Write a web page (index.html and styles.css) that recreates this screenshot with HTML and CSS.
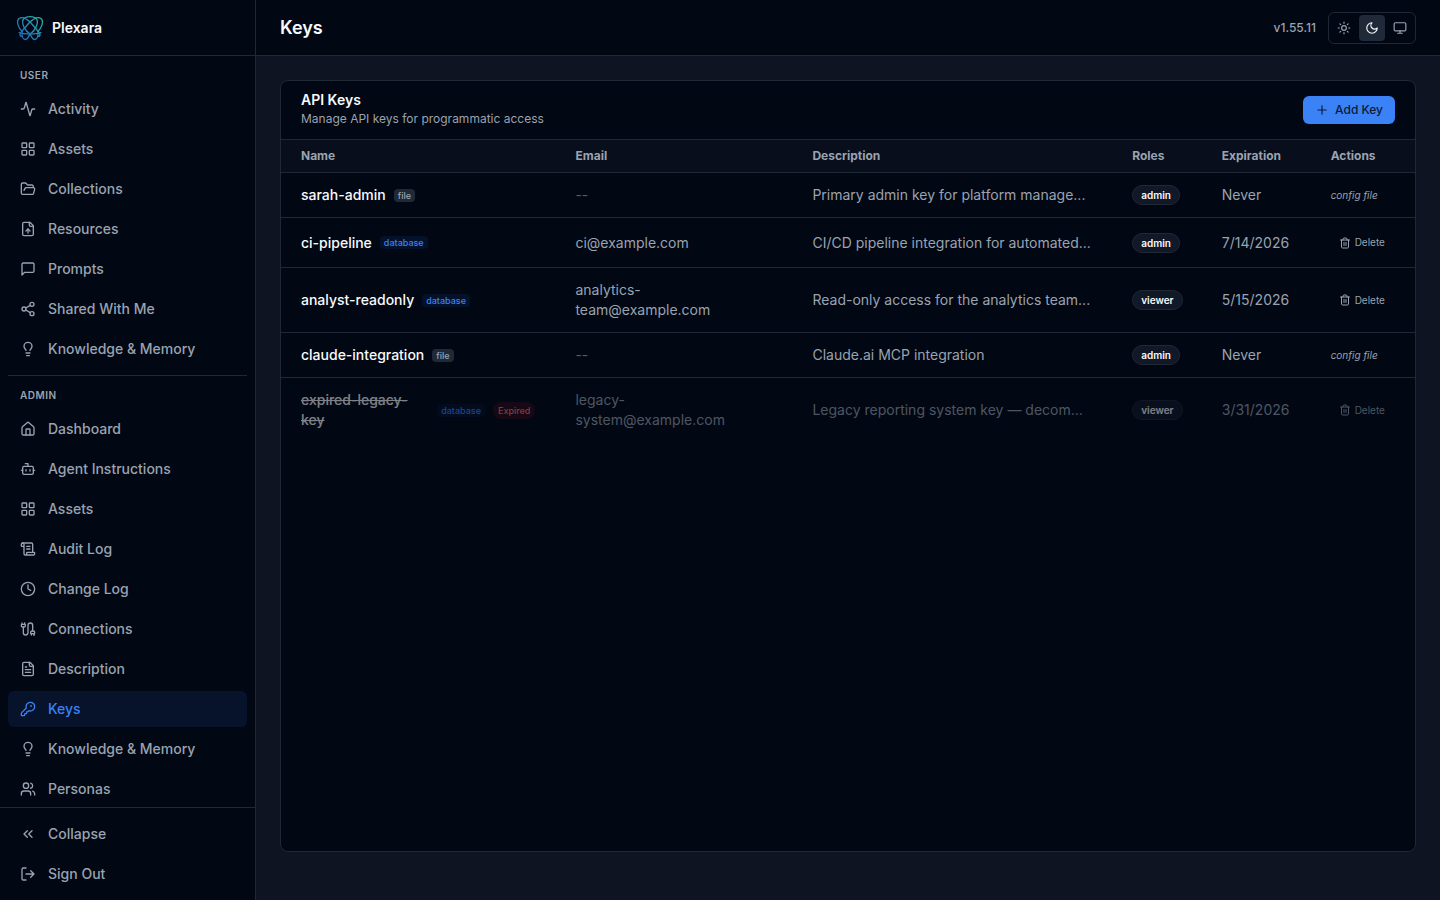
FILE: index.html
```html
<!DOCTYPE html>
<html lang="en">
<head>
<meta charset="utf-8">
<meta name="viewport" content="width=device-width, initial-scale=1">
<title>Keys - Plexara</title>
<link rel="stylesheet" href="styles.css">
</head>
<body>
<svg class="sprite" aria-hidden="true">
  <symbol id="activity" viewBox="0 0 24 24"><path d="M22 12h-2.48a2 2 0 0 0-1.93 1.46l-2.35 8.36a.25.25 0 0 1-.48 0L9.24 2.18a.25.25 0 0 0-.48 0l-2.35 8.36A2 2 0 0 1 4.49 12H2"/></symbol>
  <symbol id="grid" viewBox="0 0 24 24"><rect x="3" y="3" width="7" height="7" rx="1"/><rect x="14" y="3" width="7" height="7" rx="1"/><rect x="14" y="14" width="7" height="7" rx="1"/><rect x="3" y="14" width="7" height="7" rx="1"/></symbol>
  <symbol id="folder" viewBox="0 0 24 24"><path d="m6 14 1.5-2.9A2 2 0 0 1 9.24 10H20a2 2 0 0 1 1.94 2.5l-1.54 6a2 2 0 0 1-1.95 1.5H4a2 2 0 0 1-2-2V5a2 2 0 0 1 2-2h3.9a2 2 0 0 1 1.69.9l.81 1.2a2 2 0 0 0 1.67.9H18a2 2 0 0 1 2 2v2"/></symbol>
  <symbol id="file-up" viewBox="0 0 24 24"><path d="M15 2H6a2 2 0 0 0-2 2v16a2 2 0 0 0 2 2h12a2 2 0 0 0 2-2V7Z"/><path d="M14 2v4a2 2 0 0 0 2 2h4"/><path d="M12 12v6"/><path d="m15 15-3-3-3 3"/></symbol>
  <symbol id="message" viewBox="0 0 24 24"><path d="M21 15a2 2 0 0 1-2 2H7l-4 4V5a2 2 0 0 1 2-2h14a2 2 0 0 1 2 2z"/></symbol>
  <symbol id="share" viewBox="0 0 24 24"><circle cx="18" cy="5" r="3"/><circle cx="6" cy="12" r="3"/><circle cx="18" cy="19" r="3"/><path d="m8.59 13.51 6.83 3.98M15.41 6.51l-6.82 3.98"/></symbol>
  <symbol id="bulb" viewBox="0 0 24 24"><path d="M15 14c.2-1 .7-1.7 1.5-2.5 1-.9 1.5-2.2 1.5-3.5A6 6 0 0 0 6 8c0 1 .2 2.2 1.5 3.5.7.7 1.3 1.5 1.5 2.5M9 18h6M10 22h4"/></symbol>
  <symbol id="house" viewBox="0 0 24 24"><path d="M15 21v-8a1 1 0 0 0-1-1h-4a1 1 0 0 0-1 1v8"/><path d="M3 10a2 2 0 0 1 .709-1.528l7-6a2 2 0 0 1 2.582 0l7 6A2 2 0 0 1 21 10v9a2 2 0 0 1-2 2H5a2 2 0 0 1-2-2z"/></symbol>
  <symbol id="bot" viewBox="0 0 24 24"><path d="M12 8V4H8"/><rect x="4" y="8" width="16" height="12" rx="2"/><path d="M2 14h2M20 14h2M15 13v2M9 13v2"/></symbol>
  <symbol id="scroll" viewBox="0 0 24 24"><path d="M15 12h-5M15 8h-5M19 17V5a2 2 0 0 0-2-2H4"/><path d="M8 21h12a2 2 0 0 0 2-2v-1a1 1 0 0 0-1-1H11a1 1 0 0 0-1 1v1a2 2 0 1 1-4 0V5a2 2 0 1 0-4 0v2a1 1 0 0 0 1 1h3"/></symbol>
  <symbol id="clock" viewBox="0 0 24 24"><circle cx="12" cy="12" r="10"/><path d="M12 6v6l4 2"/></symbol>
  <symbol id="cable" viewBox="0 0 24 24"><path d="M17 21v-2a1 1 0 0 1-1-1v-1a2 2 0 0 1 2-2h2a2 2 0 0 1 2 2v1a1 1 0 0 1-1 1v2"/><path d="M19 15V6.5a1 1 0 0 0-7 0v11a1 1 0 0 1-7 0V9"/><path d="M21 21v-2h-4M3 5h4V3"/><path d="M7 5a1 1 0 0 1 1 1v1a2 2 0 0 1-2 2H4a2 2 0 0 1-2-2V6a1 1 0 0 1 1-1V3"/></symbol>
  <symbol id="file-text" viewBox="0 0 24 24"><path d="M15 2H6a2 2 0 0 0-2 2v16a2 2 0 0 0 2 2h12a2 2 0 0 0 2-2V7Z"/><path d="M14 2v4a2 2 0 0 0 2 2h4M10 9H8M16 13H8M16 17H8"/></symbol>
  <symbol id="key" viewBox="0 0 24 24"><path d="M2.586 17.414A2 2 0 0 0 2 18.828V21a1 1 0 0 0 1 1h3a1 1 0 0 0 1-1v-1a1 1 0 0 1 1-1h1a1 1 0 0 0 1-1v-1a1 1 0 0 1 1-1h.172a2 2 0 0 0 1.414-.586l.814-.814a6.5 6.5 0 1 0-4-4z"/><circle cx="16.5" cy="7.5" r=".5"/></symbol>
  <symbol id="users" viewBox="0 0 24 24"><path d="M16 21v-2a4 4 0 0 0-4-4H6a4 4 0 0 0-4 4v2"/><circle cx="9" cy="7" r="4"/><path d="M22 21v-2a4 4 0 0 0-3-3.87M16 3.13a4 4 0 0 1 0 7.75"/></symbol>
  <symbol id="collapse" viewBox="0 0 24 24"><path d="m11 17-5-5 5-5M18 17l-5-5 5-5"/></symbol>
  <symbol id="logout" viewBox="0 0 24 24"><path d="M9 21H5a2 2 0 0 1-2-2V5a2 2 0 0 1 2-2h4M16 17l5-5-5-5M21 12H9"/></symbol>
  <symbol id="sun" viewBox="0 0 24 24"><circle cx="12" cy="12" r="4"/><path d="M12 2v2M12 20v2M4.93 4.93l1.41 1.41M17.66 17.66l1.41 1.41M2 12h2M20 12h2M6.34 17.66l-1.41 1.41M19.07 4.93l-1.41 1.41"/></symbol>
  <symbol id="moon" viewBox="0 0 24 24"><path d="M12 3a6 6 0 0 0 9 9 9 9 0 1 1-9-9Z"/></symbol>
  <symbol id="monitor" viewBox="0 0 24 24"><rect x="2" y="3" width="20" height="14" rx="2"/><path d="M8 21h8M12 17v4"/></symbol>
  <symbol id="plus" viewBox="0 0 24 24"><path d="M5 12h14M12 5v14"/></symbol>
  <symbol id="trash" viewBox="0 0 24 24"><path d="M3 6h18M19 6v14c0 1-1 2-2 2H7c-1 0-2-1-2-2V6M8 6V4c0-1 1-2 2-2h4c1 0 2 1 2 2v2M10 11v6M14 11v6"/></symbol>
</svg>
<div class="app">
  <aside class="sidebar">
    <div class="brand">
      <svg class="logo" viewBox="0 0 28 28" aria-hidden="true">
        <defs><linearGradient id="brand-gradient" gradientUnits="userSpaceOnUse" x1="4" y1="24" x2="24" y2="4"><stop offset="0" stop-color="#1d68b4"/><stop offset=".5" stop-color="#2389b8"/><stop offset="1" stop-color="#2fae9e"/></linearGradient></defs>
        <g fill="none" stroke="url(#brand-gradient)" stroke-width="1.3" stroke-linecap="round" stroke-linejoin="round">
          <path d="M7 6C9 1.500 19 1.500 21 6C22.500 9.500 19 17 14.500 19.500"/>
          <path d="M7 6C5.500 9.500 9 17 13.500 19.500"/>
          <path d="M6.500 18C2 14 0 7 3 4.500C6 2.500 11 5 15 9L21.500 16.500C25 20 24.500 22.500 22 22.500"/>
          <path d="M21.500 18C26 14 28 7 25 4.500C22 2.500 17 5 13 9L6.500 16.500C3 20 3.500 22.500 6 22.500"/>
          <path d="M3 18.500C8 20.500 20 20.500 25 18.500"/>
          <path d="M6 20C6 23 7.500 25.500 9.500 25.500C11.500 25.500 12.500 23 14 20"/>
          <path d="M22 20C22 23 20.500 25.500 18.500 25.500C16.500 25.500 15.500 23 14 20"/>
        </g>
      </svg>
      <span>Plexara</span>
    </div>
    <nav class="nav" aria-label="Main">
      <h2 class="group-label">USER</h2>
      <ul class="group">
        <li><a class="item" href="#"><svg class="icon"><use href="#activity"/></svg>Activity</a></li>
        <li><a class="item" href="#"><svg class="icon"><use href="#grid"/></svg>Assets</a></li>
        <li><a class="item" href="#"><svg class="icon"><use href="#folder"/></svg>Collections</a></li>
        <li><a class="item" href="#"><svg class="icon"><use href="#file-up"/></svg>Resources</a></li>
        <li><a class="item" href="#"><svg class="icon"><use href="#message"/></svg>Prompts</a></li>
        <li><a class="item" href="#"><svg class="icon"><use href="#share"/></svg>Shared With Me</a></li>
        <li><a class="item" href="#"><svg class="icon"><use href="#bulb"/></svg>Knowledge &amp; Memory</a></li>
      </ul>
      <hr class="divider">
      <h2 class="group-label">ADMIN</h2>
      <ul class="group">
        <li><a class="item" href="#"><svg class="icon"><use href="#house"/></svg>Dashboard</a></li>
        <li><a class="item" href="#"><svg class="icon"><use href="#bot"/></svg>Agent Instructions</a></li>
        <li><a class="item" href="#"><svg class="icon"><use href="#grid"/></svg>Assets</a></li>
        <li><a class="item" href="#"><svg class="icon"><use href="#scroll"/></svg>Audit Log</a></li>
        <li><a class="item" href="#"><svg class="icon"><use href="#clock"/></svg>Change Log</a></li>
        <li><a class="item" href="#"><svg class="icon"><use href="#cable"/></svg>Connections</a></li>
        <li><a class="item" href="#"><svg class="icon"><use href="#file-text"/></svg>Description</a></li>
        <li><a class="item active" href="#" aria-current="page"><svg class="icon"><use href="#key"/></svg>Keys</a></li>
        <li><a class="item" href="#"><svg class="icon"><use href="#bulb"/></svg>Knowledge &amp; Memory</a></li>
        <li><a class="item" href="#"><svg class="icon"><use href="#users"/></svg>Personas</a></li>
      </ul>
    </nav>
    <div class="sidebar-footer">
      <button class="item" type="button"><svg class="icon"><use href="#collapse"/></svg>Collapse</button>
      <button class="item" type="button"><svg class="icon"><use href="#logout"/></svg>Sign Out</button>
    </div>
  </aside>
  <div class="page">
    <header class="topbar">
      <h1 class="page-title">Keys</h1>
      <span class="version">v1.55.11</span>
      <div class="theme" role="group" aria-label="Theme">
        <button class="theme-button" type="button" aria-label="Light"><svg class="icon small"><use href="#sun"/></svg></button>
        <button class="theme-button selected" type="button" aria-label="Dark" aria-pressed="true"><svg class="icon small"><use href="#moon"/></svg></button>
        <button class="theme-button" type="button" aria-label="System"><svg class="icon small"><use href="#monitor"/></svg></button>
      </div>
    </header>
    <main class="content">
      <section class="card">
        <div class="card-header">
          <div class="card-heading">
            <h2 class="card-title">API Keys</h2>
            <p class="card-subtitle">Manage API keys for programmatic access</p>
          </div>
          <button class="add" type="button"><svg class="icon small"><use href="#plus"/></svg>Add Key</button>
        </div>
        <table class="keys">
          <colgroup><col class="col-name"><col class="col-email"><col class="col-description"><col class="col-roles"><col class="col-expiration"><col class="col-actions"></colgroup>
          <thead>
            <tr><th>Name</th><th>Email</th><th>Description</th><th>Roles</th><th>Expiration</th><th>Actions</th></tr>
          </thead>
          <tbody>
            <tr>
              <td><div class="name"><span>sarah-admin</span><span class="tag">file</span></div></td>
              <td class="none">--</td>
              <td class="description">Primary admin key for platform manage...</td>
              <td><span class="role">admin</span></td>
              <td>Never</td>
              <td><span class="config">config file</span></td>
            </tr>
            <tr>
              <td><div class="name"><span>ci-pipeline</span><span class="tag database">database</span></div></td>
              <td>ci@example.com</td>
              <td class="description">CI/CD pipeline integration for automated...</td>
              <td><span class="role">admin</span></td>
              <td>7/14/2026</td>
              <td><button class="delete" type="button"><svg class="icon tiny"><use href="#trash"/></svg>Delete</button></td>
            </tr>
            <tr>
              <td><div class="name"><span>analyst-readonly</span><span class="tag database">database</span></div></td>
              <td>analytics-team@example.com</td>
              <td class="description">Read-only access for the analytics team...</td>
              <td><span class="role">viewer</span></td>
              <td>5/15/2026</td>
              <td><button class="delete" type="button"><svg class="icon tiny"><use href="#trash"/></svg>Delete</button></td>
            </tr>
            <tr>
              <td><div class="name"><span>claude-integration</span><span class="tag">file</span></div></td>
              <td class="none">--</td>
              <td class="description">Claude.ai MCP integration</td>
              <td><span class="role">admin</span></td>
              <td>Never</td>
              <td><span class="config">config file</span></td>
            </tr>
            <tr class="expired">
              <td><div class="name"><s>expired-legacy-key</s><span class="tag database">database</span><span class="tag expired-tag">Expired</span></div></td>
              <td>legacy-system@example.com</td>
              <td class="description">Legacy reporting system key — decom...</td>
              <td><span class="role">viewer</span></td>
              <td>3/31/2026</td>
              <td><button class="delete" type="button"><svg class="icon tiny"><use href="#trash"/></svg>Delete</button></td>
            </tr>
          </tbody>
        </table>
      </section>
    </main>
  </div>
</div>
</body>
</html>
```
FILE: styles.css
```css
:root {
  --bg: #010713;
  --surface: #0e1422;
  --head: #080e1b;
  --border: #1f2835;
  --secondary: #1f2937;
  --text: #f9fafb;
  --muted: #9aa3b0;
  --primary: #3b82f6;
}

* { box-sizing: border-box; }

body {
  margin: 0;
  background: var(--surface);
  color: var(--text);
  font-family: Inter, "Liberation Sans", sans-serif;
  font-size: 14px;
  line-height: 20px;
}

h1, h2, p, ul { margin: 0; padding: 0; }
ul { list-style: none; }
button { font: inherit; color: inherit; border: 0; background: none; cursor: pointer; }
a { color: inherit; text-decoration: none; }

.sprite { display: none; }

.icon {
  width: 16px;
  height: 16px;
  flex: none;
  fill: none;
  stroke: currentColor;
  stroke-width: 2;
  stroke-linecap: round;
  stroke-linejoin: round;
}
.icon.small { width: 14px; height: 14px; }
.icon.tiny { width: 12px; height: 12px; }

.app { display: flex; height: 100vh; }

.sidebar {
  display: flex;
  flex-direction: column;
  flex: none;
  width: 256px;
  background: var(--bg);
  border-right: 1px solid var(--border);
}

.brand {
  display: flex;
  align-items: center;
  gap: 8px;
  flex: none;
  height: 56px;
  padding: 0 16px;
  border-bottom: 1px solid var(--border);
  font-weight: 600;
}
.logo { width: 28px; height: 28px; }

.nav { flex: 1; min-height: 0; padding: 0 8px; overflow: hidden; }
.group, .sidebar-footer { display: flex; flex-direction: column; gap: 4px; }

.group-label {
  padding: 12px 12px 8px;
  color: var(--muted);
  font-size: 10px;
  font-weight: 600;
  line-height: 15px;
  letter-spacing: 0.5px;
}

.divider { margin: 8px 0 0; border: 0; border-top: 1px solid var(--border); }

.item {
  display: flex;
  align-items: center;
  gap: 12px;
  width: 100%;
  padding: 8px 12px;
  border-radius: 6px;
  color: var(--muted);
  font-weight: 500;
  text-align: left;
}
.item.active { background: #07132b; color: var(--primary); }

.sidebar-footer { flex: none; padding: 8px; border-top: 1px solid var(--border); }

.page { display: flex; flex-direction: column; flex: 1; min-width: 0; }

.topbar {
  display: flex;
  align-items: center;
  gap: 12px;
  flex: none;
  height: 56px;
  padding: 0 24px;
  background: var(--bg);
  border-bottom: 1px solid var(--border);
}
.page-title { flex: 1; font-size: 18px; font-weight: 600; line-height: 28px; }
.version { color: var(--muted); font-size: 12px; font-weight: 500; line-height: 16px; }

.theme {
  display: flex;
  gap: 2px;
  padding: 2px;
  border: 1px solid var(--border);
  border-radius: 6px;
}
.theme-button { display: flex; padding: 6px; border-radius: 4px; color: var(--muted); }
.theme-button.selected { background: var(--secondary); color: var(--text); }

.content { display: flex; flex: 1; min-height: 0; padding: 24px 24px 48px; }

.card {
  flex: 1;
  min-width: 0;
  overflow: hidden;
  background: var(--bg);
  border: 1px solid var(--border);
  border-radius: 8px;
}
.card-header {
  display: flex;
  align-items: center;
  justify-content: space-between;
  padding: 10px 20px;
  border-bottom: 1px solid var(--border);
}
.card-title { font-size: 14px; font-weight: 600; line-height: 18px; }
.card-subtitle { color: var(--muted); font-size: 12px; line-height: 20px; }

.add {
  display: flex;
  align-items: center;
  gap: 6px;
  padding: 6px 12px;
  border-radius: 6px;
  background: var(--primary);
  color: #0b1a38;
  font-size: 12px;
  font-weight: 500;
  line-height: 16px;
}

.keys { width: 100%; table-layout: fixed; border-collapse: separate; border-spacing: 0; }
.col-name { width: 24.2%; }
.col-email { width: 20.9%; }
.col-description { width: 28.2%; }
.col-roles { width: 7.9%; }
.col-expiration { width: 9.6%; }
.col-actions { width: 9.2%; }

.keys th {
  padding: 8px 20px;
  background: var(--head);
  border-bottom: 1px solid var(--border);
  color: var(--muted);
  font-size: 12px;
  font-weight: 700;
  line-height: 16px;
  text-align: left;
}
.keys td {
  padding: 12px 20px;
  border-bottom: 1px solid var(--border);
  color: var(--muted);
}
.keys tr:last-child td { border-bottom: 0; }
.keys .none { color: #555d69; }
.keys .description { padding-right: 8px; white-space: nowrap; }

.name { display: flex; align-items: center; gap: 8px; color: var(--text); font-weight: 500; }

.tag {
  padding: 0 4px;
  border-radius: 4px;
  background: var(--secondary);
  color: var(--muted);
  font-size: 9px;
  line-height: 13px;
}
.tag.database { background: #04112a; color: var(--primary); }
.tag.expired-tag { padding: 2px 5px; border-radius: 8px; background: #2c0a18; color: #ef4444; font-weight: 500; }

.role {
  display: block;
  width: fit-content;
  padding: 1px 8px;
  border: 1px solid var(--border);
  border-radius: 10px;
  background: #111827;
  color: var(--text);
  font-size: 10px;
  font-weight: 600;
  line-height: 18px;
  margin: -1px 0;
}

.config { display: block; font-size: 10px; font-style: italic; }

.delete {
  display: flex;
  align-items: center;
  gap: 4px;
  padding: 5px 8px;
  font-size: 10px;
  line-height: 15px;
}

.role { margin: 0; line-height: 16px; }

.expired { opacity: 0.5; }
.expired .expired-tag { color: #f87171; }
```
